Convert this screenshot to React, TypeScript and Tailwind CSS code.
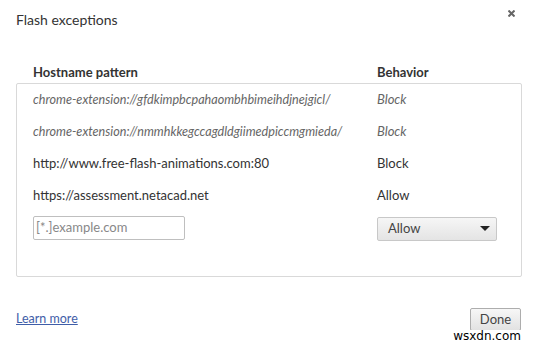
import React from "react";

const rows = [
  { host: "chrome-extension://gfdkimpbcpahaombhbimeihdjnejgicl/", beh: "Block", italic: true },
  { host: "chrome-extension://nmmhkkegccagdldgiimedpiccmgmieda/", beh: "Block", italic: true },
  { host: "http://www.free-flash-animations.com:80", beh: "Block", italic: false },
  { host: "https://assessment.netacad.net", beh: "Allow", italic: false },
];

export default function App() {
  return (
    <div
      className="relative w-[535px] h-[342px] bg-white text-[#333] overflow-hidden"
      style={{ fontFamily: 'Lato, "Open Sans", Arial, sans-serif' }}
    >
      <div className="flex items-start justify-between pl-4 pr-[20px] pt-[10px]">
        <h1 className="text-[14px] leading-[20px] text-[#333]">Flash exceptions</h1>
        <svg width="7" height="7" viewBox="0 0 7 7" className="mt-0">
          <path d="M0.5 0.5 L6.5 6.5 M6.5 0.5 L0.5 6.5" stroke="#666" strokeWidth="2" />
        </svg>
      </div>

      <div className="ml-4 w-[506px] mt-[33px]">
        <div className="flex h-[20px] items-center pl-[17px] text-[13px] font-bold text-[#333]">
          <div className="w-[344px]">Hostname pattern</div>
          <div>Behavior</div>
        </div>
        <div className="h-[194px] border border-[#d9d9d9] rounded-[2px]">
          {rows.map((r) => (
            <div
              key={r.host}
              className={`flex h-[32px] items-center pl-4 text-[13px] ${
                r.italic ? "italic text-[#666]" : "text-[#333]"
              }`}
            >
              <div className={`w-[344px] ${r.italic ? "text-[12.6px]" : ""}`}>{r.host}</div>
              <div>{r.beh}</div>
            </div>
          ))}
          <div className="flex h-[32px] items-center pl-4 text-[13px]">
            <div className="w-[344px]">
              <div className="w-[152px] h-[24px] border border-[#bfbfbf] rounded-[2px] flex items-center px-[2px] text-[#888]">
                [*.]example.com
              </div>
            </div>
            <div className="w-[120px] h-[24px] mt-[2px] border border-[#c8c8c8] rounded-[2px] bg-gradient-to-b from-[#f6f6f6] to-[#e4e4e4] flex items-center justify-between pl-[10px] pr-[6px] text-[#444]">
              <span>Allow</span>
              <svg width="10" height="6" viewBox="0 0 10 6">
                <path d="M0 0 L10 0 L5 5 Z" fill="#222" />
              </svg>
            </div>
          </div>
        </div>
      </div>

      <div className="flex items-center justify-between pl-4 pr-[14px] mt-[31px]">
        <a className="text-[12.5px] underline text-[#3f5ea8]">Learn more</a>
        <button className="w-[51px] h-[23px] border border-[#adadad] rounded-[2px] bg-gradient-to-b from-[#f7f7f7] to-[#e2e2e2] text-[13px] text-[#444]">
          Done
        </button>
      </div>
      <div
        className="absolute right-[14px] bottom-0 text-[12px] text-black bg-white leading-[12px]"
        style={{ fontFamily: '"DejaVu Sans", sans-serif' }}
      >
        wsxdn.com
      </div>
    </div>
  );
}
